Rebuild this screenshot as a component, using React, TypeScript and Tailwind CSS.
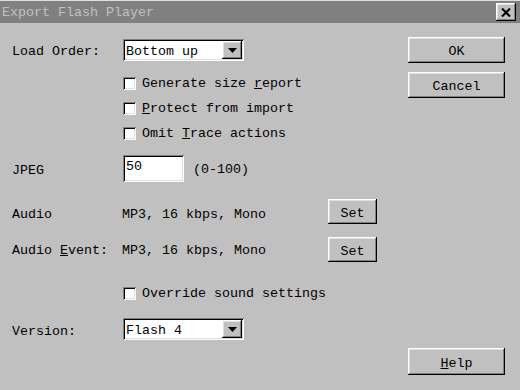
const raised =
  'bg-[#c0c0c0] shadow-[inset_-1px_-1px_0_#000,inset_1px_1px_0_#fff,inset_-2px_-2px_0_#808080,inset_2px_2px_0_#dfdfdf]'
const sunken =
  'bg-white shadow-[inset_1px_1px_0_#808080,inset_-1px_-1px_0_#fff,inset_2px_2px_0_#000,inset_-2px_-2px_0_#dfdfdf]'

function Button({ children, className = '' }: { children: React.ReactNode; className?: string }) {
  return (
    <div className={`${raised} flex items-center justify-center ${className}`}>
      <span className="translate-y-[2px] leading-none">{children}</span>
    </div>
  )
}

function Combo({ value }: { value: string }) {
  return (
    <div className={`${sunken} flex h-[22px] w-[121px] items-center pl-[3px] pr-[2px]`}>
      <span className="flex-1 translate-y-[2px] leading-none">{value}</span>
      <div className={`${raised} flex h-[18px] w-[20px] items-center justify-center`}>
        <svg width="9" height="5" viewBox="0 0 9 5">
          <path d="M0 0h9L4.5 5z" fill="#000" />
        </svg>
      </div>
    </div>
  )
}

function Check({ children }: { children: React.ReactNode }) {
  return (
    <div className="flex h-[25px] items-center">
      <div className="h-[13px] w-[13px] bg-white shadow-[inset_1px_1px_0_#808080,inset_-1px_-1px_0_#fff,inset_2px_2px_0_#000,inset_-2px_-2px_0_#dfdfdf]" />
      <span className="ml-[6px] leading-none">{children}</span>
    </div>
  )
}

export default function App() {
  return (
    <div
      className="flex h-[390px] w-[520px] flex-col bg-[#c0c0c0] text-[13.33px] text-black"
      style={{ fontFamily: '"Liberation Mono", monospace' }}
    >
      <div className="flex h-[23px] items-center justify-between border-t border-[#dfdfdf] bg-[#808080] pl-[2px] pr-[4px]">
        <span className="translate-y-[1px] leading-none text-[#c0c0c0]">Export Flash Player</span>
        <div className={`${raised} flex h-[18px] w-[20px] items-center justify-center`}>
          <svg width="10" height="9" viewBox="0 0 10 9">
            <path d="M1 0.5l8 8M9 0.5l-8 8" stroke="#000" strokeWidth="2" />
          </svg>
        </div>
      </div>

      <div className="flex flex-1">
        <div className="ml-[12px] flex flex-col">
          <div className="mt-[16px] flex items-center">
            <span className="w-[111px] translate-y-[2px] leading-none">Load Order:</span>
            <Combo value="Bottom up" />
          </div>

          <div className="ml-[111px] mt-[10px] flex flex-col">
            <Check>
              Generate size <u>r</u>eport
            </Check>
            <Check>
              <u>P</u>rotect from import
            </Check>
            <Check>
              Omit <u>T</u>race actions
            </Check>
          </div>

          <div className="mt-[9px] flex items-center">
            <span className="w-[111px] translate-y-[2px] leading-none">JPEG</span>
            <div className={`${sunken} flex h-[27px] w-[61px] items-start pl-[3px] pt-[5px]`}>
              <span className="leading-none">50</span>
            </div>
            <span className="ml-[9px] translate-y-[1px] leading-none">(0-100)</span>
          </div>

          <div className="mt-[17px] flex h-[25px] items-center">
            <span className="w-[110px] translate-y-[3px] leading-none">Audio</span>
            <span className="w-[206px] translate-y-[3px] leading-none">MP3, 16 kbps, Mono</span>
            <Button className="h-[25px] w-[49px]">Set</Button>
          </div>

          <div className="mt-[13px] flex h-[25px] items-center">
            <span className="w-[110px] translate-y-[1px] leading-none">
              Audio <u>E</u>vent:
            </span>
            <span className="w-[206px] translate-y-[1px] leading-none">MP3, 16 kbps, Mono</span>
            <Button className="h-[25px] w-[49px]">Set</Button>
          </div>

          <div className="ml-[111px] mt-[19px]">
            <Check>Override sound settings</Check>
          </div>

          <div className="mt-[12px] flex items-center">
            <span className="w-[111px] translate-y-[3px] leading-none">Version:</span>
            <Combo value="Flash 4" />
          </div>
        </div>

        <div className="ml-auto mr-[15px] flex w-[97px] flex-col pb-[15px]">
          <Button className="mt-[14px] h-[26px]">OK</Button>
          <Button className="mt-[9px] h-[26px]">Cancel</Button>
          <Button className="mt-auto h-[27px]">
            <u>H</u>elp
          </Button>
        </div>
      </div>
    </div>
  )
}
